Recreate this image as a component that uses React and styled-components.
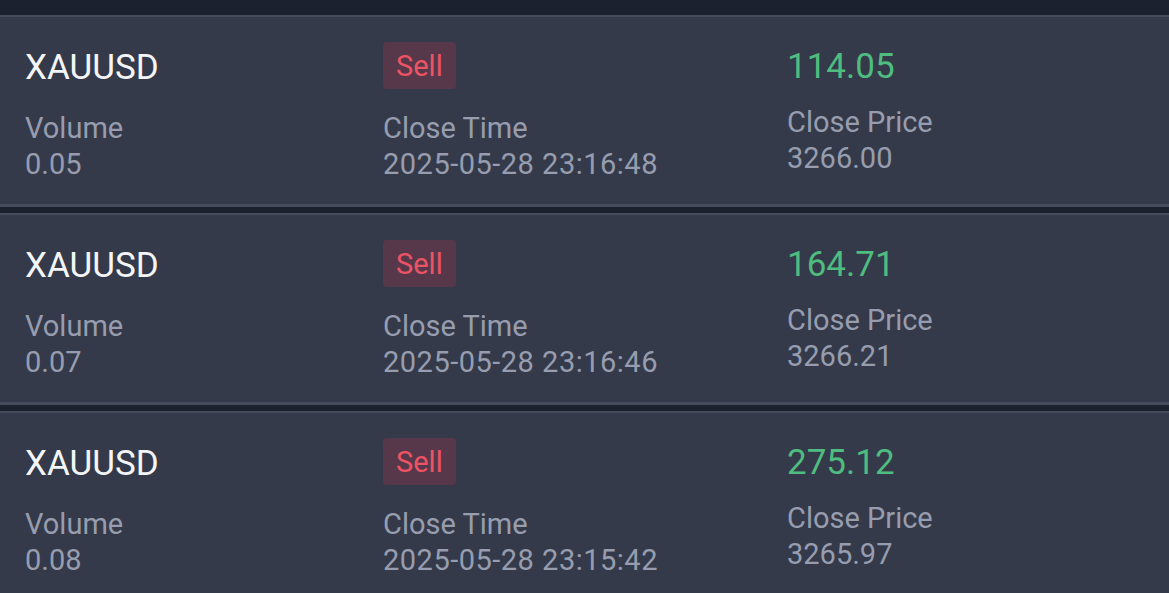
import React from 'react';
import styled, { createGlobalStyle } from 'styled-components';

const GlobalStyle = createGlobalStyle`
  html, body {
    margin: 0;
    padding: 0;
    background: #1c2130;
    font-family: Roboto, "Liberation Sans", sans-serif;
  }
`;

const OrderList = styled.div`
  display: flex;
  flex-direction: column;
  gap: 6px;
  padding-top: 15px;
`;

const OrderCard = styled.div`
  display: grid;
  grid-template-columns: 358px 404px 1fr;
  padding: 25px 0 22px 25px;
  background: #343a4a;
  border-top: 2px solid #454c5c;
  border-bottom: 3px solid #454c5c;
`;

const Column = styled.div`
  display: flex;
  flex-direction: column;
`;

const TopRow = styled.div`
  height: 47px;
  display: flex;
  align-items: center;
  margin-bottom: ${(p) => p.$gap}px;
`;

const Symbol = styled.span`
  font-size: 35px;
  color: #f4f5f7;
  line-height: 47px;
  padding-top: 4px;
`;

const SideBadge = styled.span`
  height: 47px;
  box-sizing: border-box;
  padding: 0 13px;
  display: flex;
  align-items: center;
  border-radius: 4px;
  background: #56384a;
  color: #ec5364;
  font-size: 29px;
`;

const Profit = styled.span`
  font-size: 35px;
  color: #4fbc80;
  line-height: 47px;
  padding-top: 2px;
`;

const Label = styled.span`
  font-size: 29px;
  line-height: 36px;
  color: #979dae;
`;

const Value = styled.span`
  font-size: 29px;
  line-height: 36px;
  color: #979dae;
  letter-spacing: ${(p) => (p.$wide ? '0.5px' : '0')};
`;

const orders = [
  { symbol: 'XAUUSD', volume: '0.05', time: '2025-05-28 23:16:48', profit: '114.05', price: '3266.00' },
  { symbol: 'XAUUSD', volume: '0.07', time: '2025-05-28 23:16:46', profit: '164.71', price: '3266.21' },
  { symbol: 'XAUUSD', volume: '0.08', time: '2025-05-28 23:15:42', profit: '275.12', price: '3265.97' },
];

export default function App() {
  return (
    <>
      <GlobalStyle />
      <OrderList>
        {orders.map((o, i) => (
          <OrderCard key={i}>
            <Column>
              <TopRow $gap={21}>
                <Symbol>{o.symbol}</Symbol>
              </TopRow>
              <Label>Volume</Label>
              <Value>{o.volume}</Value>
            </Column>
            <Column>
              <TopRow $gap={21}>
                <SideBadge>Sell</SideBadge>
              </TopRow>
              <Label>Close Time</Label>
              <Value $wide>{o.time}</Value>
            </Column>
            <Column>
              <TopRow $gap={15}>
                <Profit>{o.profit}</Profit>
              </TopRow>
              <Label>Close Price</Label>
              <Value>{o.price}</Value>
            </Column>
          </OrderCard>
        ))}
      </OrderList>
    </>
  );
}
